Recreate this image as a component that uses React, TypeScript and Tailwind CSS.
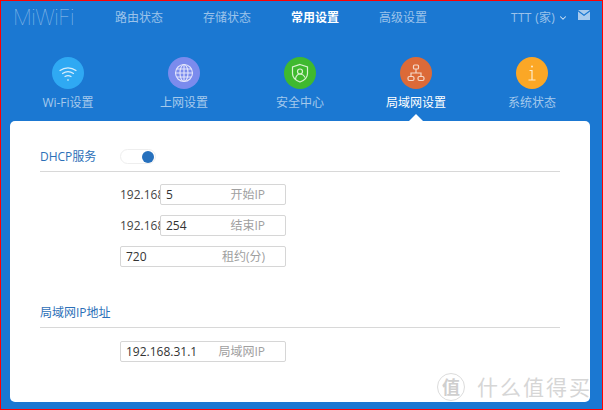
import { ChevronDown } from "lucide-react"

const font = { fontFamily: '"Open Sans", "Noto Sans CJK SC", sans-serif' }

const navItems = [
  { label: "路由状态", active: false },
  { label: "存储状态", active: false },
  { label: "常用设置", active: true },
  { label: "高级设置", active: false },
]

function WifiIcon() {
  return (
    <svg width="32" height="32" viewBox="0 0 32 32" fill="none" stroke="#d8eefc" strokeWidth="1.2" strokeLinecap="round">
      <path d="M8 13.5c4.800-3.600 11.200-3.600 16 0" />
      <path d="M10.500 16.500c3.400-2.400 7.600-2.400 11 0" />
      <path d="M13 19.500c2-1.200 4-1.200 6 0" />
      <circle cx="16" cy="23" r="0.8" fill="#ffffff" stroke="none" />
    </svg>
  )
}

function GlobeIcon() {
  return (
    <svg width="32" height="32" viewBox="0 0 32 32" fill="none" stroke="#e4e6fb" strokeWidth="1.1">
      <circle cx="16" cy="16" r="8.500" />
      <ellipse cx="16" cy="16" rx="4" ry="8.500" />
      <path d="M16 7.500v17M7.500 16h17M8.600 12h14.800M8.600 20h14.800" />
    </svg>
  )
}

function ShieldIcon() {
  return (
    <svg width="32" height="32" viewBox="0 0 32 32" fill="none" stroke="#d9f3d0" strokeWidth="1.2">
      <path d="M16 7.500l7.500 2.500v6.500c0 4-3 6.800-7.500 8.500-4.500-1.700-7.500-4.500-7.500-8.500V10z" />
      <circle cx="16" cy="14.500" r="2.500" />
      <path d="M11.500 22c.5-3 2.200-5 4.500-5s4 1.500 5 3.500" />
    </svg>
  )
}

function NetworkIcon() {
  return (
    <svg width="32" height="32" viewBox="0 0 32 32" fill="none" stroke="#f6d9c8" strokeWidth="1.2">
      <rect x="13.500" y="8" width="5" height="4" rx="1" />
      <rect x="8" y="19.500" width="6" height="4" rx="1.500" />
      <rect x="18" y="19.500" width="6" height="4" rx="1.500" />
      <path d="M16 12v4M11 19.500V16h10v3.500" />
    </svg>
  )
}

function InfoIcon() {
  return (
    <svg width="32" height="32" viewBox="0 0 32 32" fill="none" stroke="#fdeccb" strokeWidth="1.2">
      <circle cx="16" cy="9.500" r="1" fill="#fdeccb" stroke="none" />
      <path d="M13.500 13.500H16v9.500M12.500 23h7" />
    </svg>
  )
}

function MailIcon() {
  return (
    <svg width="12" height="10" viewBox="0 0 12 10" className="ml-[10px] -translate-y-[3px]">
      <path d="M0 0h12L6 4.500z" fill="#a9cbee" />
      <path d="M0 1.500l6 4.500 6-4.500V10H0z" fill="#a9cbee" />
    </svg>
  )
}

const tiles = [
  { label: "Wi-Fi设置", bg: "bg-[#2fa9f3]", icon: <WifiIcon />, active: false },
  { label: "上网设置", bg: "bg-[#7b8bed]", icon: <GlobeIcon />, active: false },
  { label: "安全中心", bg: "bg-[#3fb92f]", icon: <ShieldIcon />, active: false },
  { label: "局域网设置", bg: "bg-[#dc6a38]", icon: <NetworkIcon />, active: true },
  { label: "系统状态", bg: "bg-[#fba726]", icon: <InfoIcon />, active: false },
]

function Field({ value, hint, short }: { value: string; hint: string; short?: boolean }) {
  return (
    <div className="flex h-[21px] w-[166px] items-center">
      {short && <span className="w-10 shrink-0 overflow-hidden whitespace-nowrap text-[#444]">192.168.31.</span>}
      <div className="flex h-[21px] min-w-0 flex-1 items-center justify-between rounded-[2px] border border-[#d6d6d6] bg-white pl-[5px] pr-[20px]">
        <span className="text-[#333]">{value}</span>
        <span className="whitespace-nowrap text-[#a0a0a0]">{hint}</span>
      </div>
    </div>
  )
}

export default function App() {
  return (
    <div
      style={font}
      className="relative h-[410px] w-[603px] overflow-hidden border border-[#ff0000] bg-[#1b78d2] text-xs"
    >
      {/* top nav */}
      <div className="flex h-[33px] items-center">
        <span
          style={{ fontFamily: '"Inter", sans-serif' }}
          className="ml-[12px] w-[82px] text-[21px] font-thin leading-none tracking-[-0.5px] text-[#9cc3ea]"
        >
          MiWiFi
        </span>
        <div className="flex">
          {navItems.map((n) => (
            <span
              key={n.label}
              className={
                n.active
                  ? "w-[88px] text-center font-bold text-white"
                  : "w-[88px] text-center text-[#9cc3ea]"
              }
            >
              {n.label}
            </span>
          ))}
        </div>
        <div className="ml-[64px] flex items-center text-[#9cc3ea]">
          <span className="tracking-[0.3px]">TTT (家)</span>
          <ChevronDown size={10} strokeWidth={2.5} className="ml-[3px] text-[#d6e6f6]" />
          <MailIcon />
        </div>
      </div>

      {/* icon tabs */}
      <div className="mx-[9px] mt-[23px] grid h-[64px] w-[580px] grid-cols-5">
        {tiles.map((t) => (
          <div key={t.label} className="relative flex flex-col items-center">
            <div className={`flex h-8 w-8 items-center justify-center rounded-full ${t.bg}`}>{t.icon}</div>
            <span className={t.active ? "mt-[6px] text-white" : "mt-[6px] text-[#a5c9ec]"}>{t.label}</span>
            {t.active && (
              <div className="absolute bottom-0 h-0 w-0 border-x-[7px] border-b-[7px] border-x-transparent border-b-white" />
            )}
          </div>
        ))}
      </div>

      {/* card */}
      <div className="mx-[9px] h-[281px] w-[580px] rounded-[5px] bg-white px-[30px] pt-[28px]">
        <div className="flex h-[23px] items-start border-b border-[#d8d8d8]">
          <span className="w-[80px] text-[#2c70b8]">DHCP服务</span>
          <div className="flex h-[15px] w-[36px] items-center justify-end rounded-full border border-[#eeeeee] pr-[1px]">
            <div className="h-3 w-3 rounded-full bg-[#2670bd]" />
          </div>
        </div>
        <div className="ml-[80px] mt-[12px] flex flex-col gap-[10px]">
          <Field short value="5" hint="开始IP" />
          <Field short value="254" hint="结束IP" />
          <Field value="720" hint="租约(分)" />
        </div>

        <div className="mt-[38px] h-[23px] border-b border-[#d8d8d8] text-[#2c70b8]">局域网IP地址</div>
        <div className="ml-[80px] mt-[13px]">
          <Field value="192.168.31.1" hint="局域网IP" />
        </div>
      </div>

      {/* watermark */}
      <div className="absolute left-[436px] top-[372px] flex items-center text-[#d6d6d6]">
        <div className="flex h-[28px] w-[28px] items-center justify-center rounded-full border border-[#dcdcdc] text-[18px] font-bold text-[#cfcfcf]">
          值
        </div>
        <span className="ml-[12px] text-[21px] leading-none tracking-[2px]">什么值得买</span>
      </div>
    </div>
  )
}
